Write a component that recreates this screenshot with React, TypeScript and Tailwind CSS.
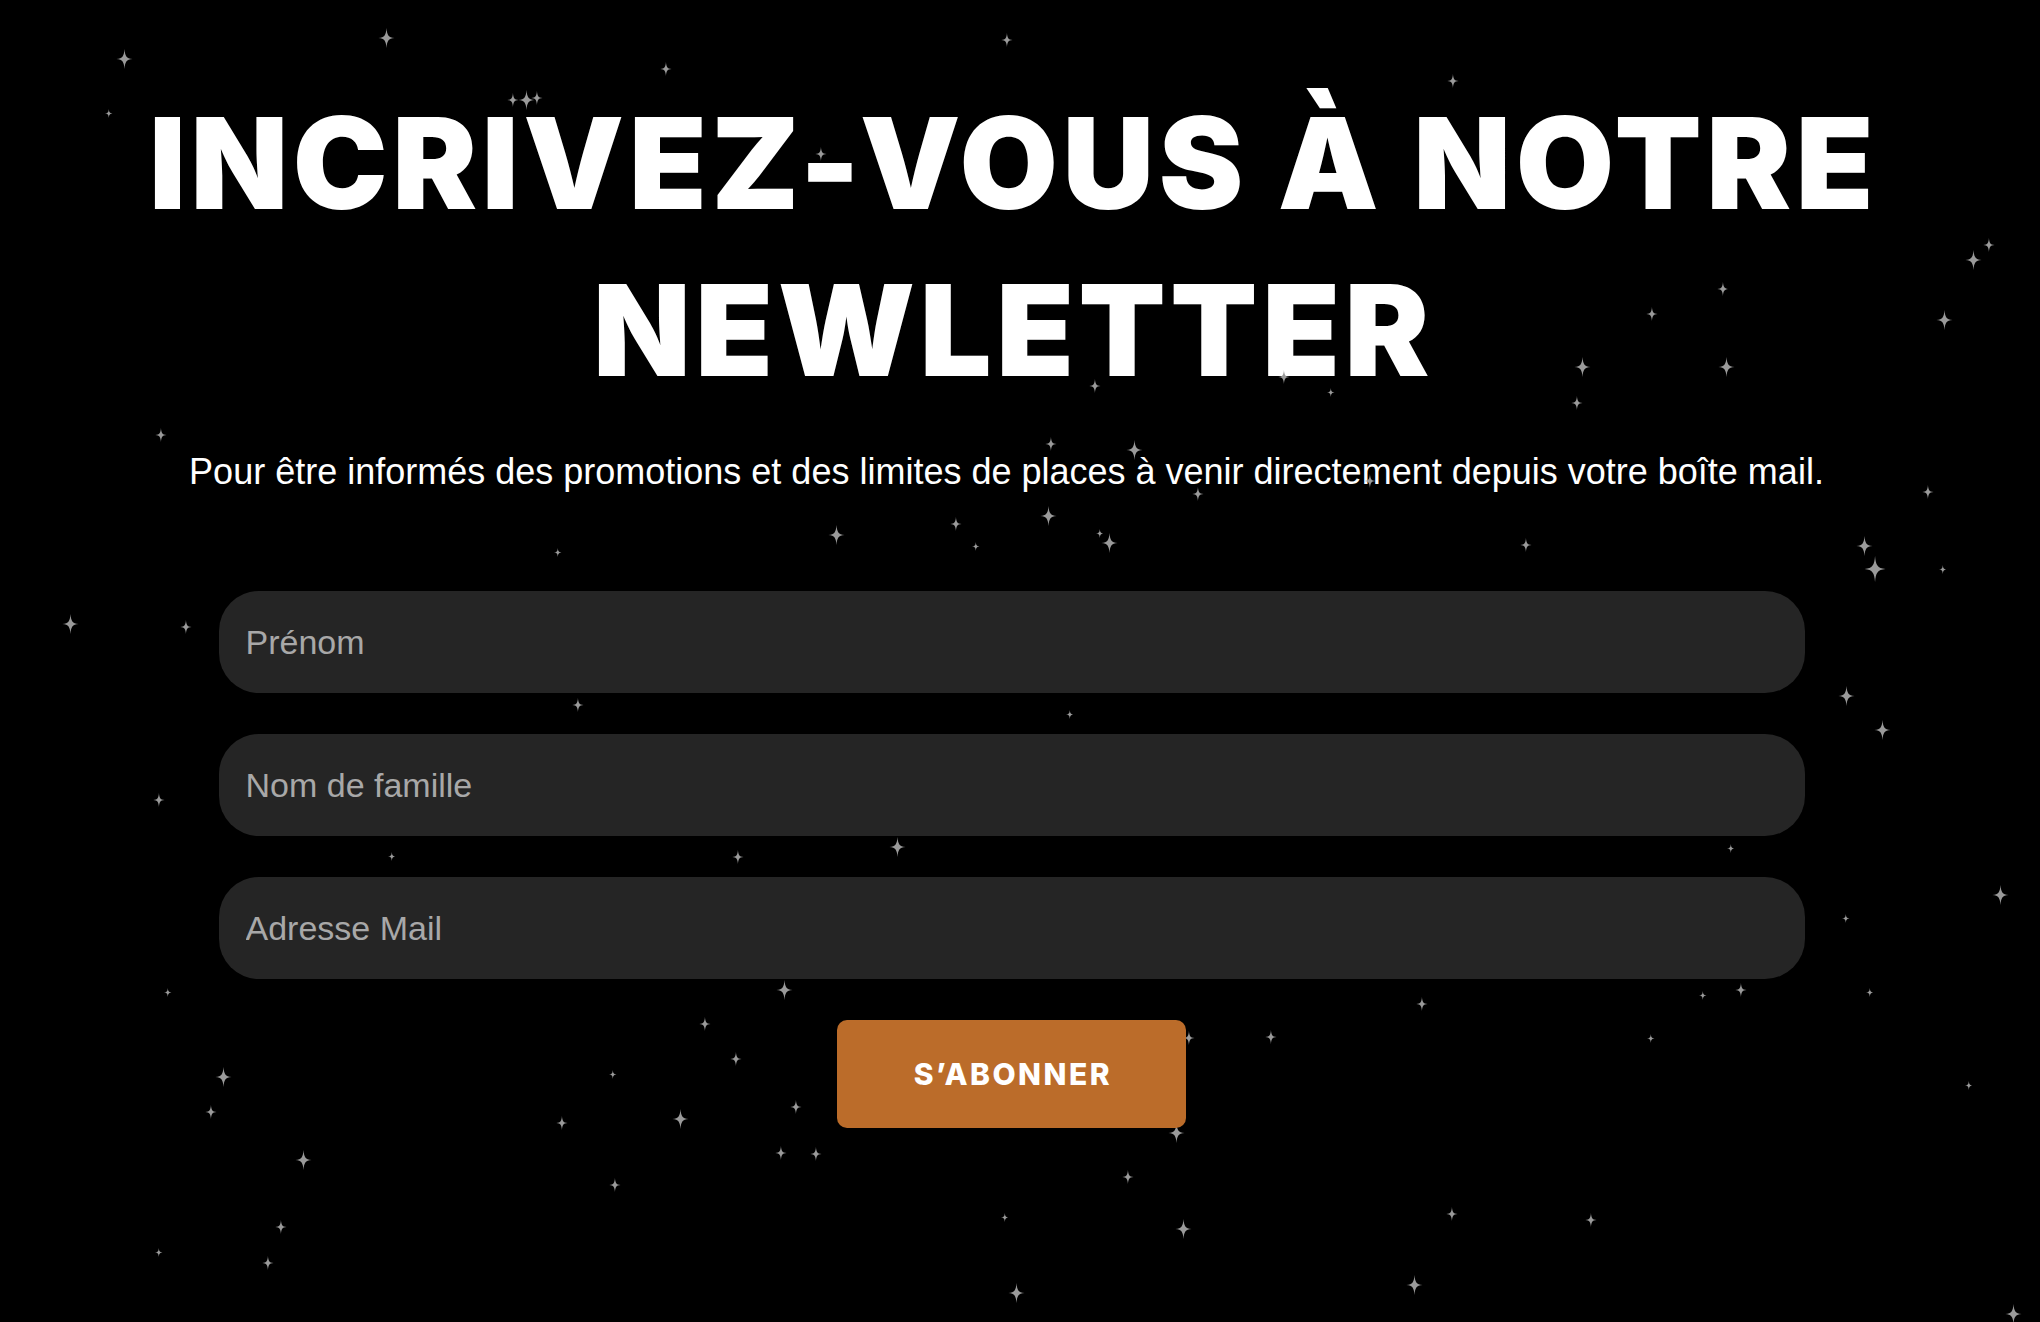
import React from "react";

type Star = [number, number, number];

// coordinates measured on a 1568-wide view, converted at runtime
const S = 1.301;
const xs = 9, s = 14, m = 20, l = 26;
const STARS: Star[] = [
  [96, 45, m], [297, 29, m], [512, 53, s], [774, 31, s], [1117, 62, s],
  [394, 77, s], [405, 77, m], [413, 75, s], [84, 87, xs], [631, 118, s],
  [1529, 188, s], [1517, 200, m], [1324, 222, s], [1270, 241, s], [1495, 246, m],
  [1216, 282, m], [1327, 282, m], [1023, 302, xs], [1212, 310, s], [842, 297, s],
  [987, 290, s], [124, 334, s], [808, 341, s], [872, 346, m], [921, 380, s],
  [1482, 378, s], [1053, 370, s], [643, 411, m], [735, 403, s], [806, 397, m],
  [845, 410, xs], [853, 417, m], [750, 420, xs], [1173, 419, s], [429, 425, xs],
  [1433, 420, m], [1441, 437, l], [1493, 438, xs], [54, 480, m], [143, 482, s],
  [444, 542, s], [822, 549, xs], [1419, 535, m], [1447, 561, m], [122, 615, s],
  [301, 658, xs], [567, 659, s], [690, 651, m], [1330, 652, xs], [1538, 688, m],
  [1419, 706, xs], [129, 763, xs], [603, 761, m], [1093, 772, s], [1338, 761, s],
  [1309, 765, xs], [1437, 763, xs], [542, 787, s], [914, 798, s], [977, 797, s],
  [1269, 798, xs], [566, 814, s], [172, 828, m], [471, 826, xs], [1513, 834, xs],
  [162, 855, s], [612, 851, s], [523, 860, m], [432, 863, s], [600, 886, s],
  [627, 887, s], [904, 871, m], [233, 892, m], [473, 911, s], [867, 905, s],
  [1116, 933, s], [1223, 938, s], [772, 936, xs], [910, 945, m], [216, 943, s],
  [122, 963, xs], [206, 971, s], [781, 994, m], [1087, 988, m], [1548, 1010, m],
];

function Sparkle({ x, y, size }: { x: number; y: number; size: number }) {
  const w = size * 0.85;
  return (
    <svg
      className="absolute"
      style={{ left: x * S - w / 2, top: y * S - size / 2, width: w, height: size }}
      viewBox="0 0 16 20"
    >
      <path
        d="M8 0 C8.6 7 9.8 9.4 16 10 C9.8 10.6 8.6 13 8 20 C7.4 13 6.2 10.6 0 10 C6.2 9.4 7.4 7 8 0 Z"
        fill="#9a9a9a"
      />
    </svg>
  );
}

export default function App() {
  return (
    <div className="relative min-h-[1322px] w-full overflow-hidden bg-black">
      <div className="pointer-events-none absolute inset-0">
        {STARS.map(([x, y, sz], i) => (
          <Sparkle key={i} x={x} y={y} size={sz} />
        ))}
      </div>
      <div className="flex flex-col items-center pr-[17px]">
        <h1 className="mt-[80px] pl-[4px] text-center font-['Inter',sans-serif] text-[127px] font-black leading-[167px] tracking-[4.6px] text-white">
          INCRIVEZ-VOUS À NOTRE
          <br />
          NEWLETTER
        </h1>
        <p className="mt-[37px] pr-[10px] text-center font-['Liberation_Sans',Arial,sans-serif] text-[36px] leading-[41px] text-white">
          Pour être informés des promotions et des limites de places à venir directement depuis votre boîte mail.
        </p>
        <form className="relative z-10 mt-[99px] flex w-[1586px] flex-col gap-[41px]">
          {["Prénom", "Nom de famille", "Adresse Mail"].map((ph) => (
            <input
              key={ph}
              type="text"
              placeholder={ph}
              className="h-[102px] w-full rounded-[40px] bg-[#252525] pl-[27px] font-['Liberation_Sans',Arial,sans-serif] text-[34px] text-white outline-none placeholder:text-[#a8a8a8]"
            />
          ))}
        </form>
        <button
          type="button"
          className="relative z-10 mt-[41px] h-[108px] w-[349px] rounded-[10px] bg-[#bb6c2a] pl-[3px] font-['Inter',sans-serif] text-[30px] font-extrabold tracking-[2.5px] text-white"
        >
          S’ABONNER
        </button>
      </div>
    </div>
  );
}
